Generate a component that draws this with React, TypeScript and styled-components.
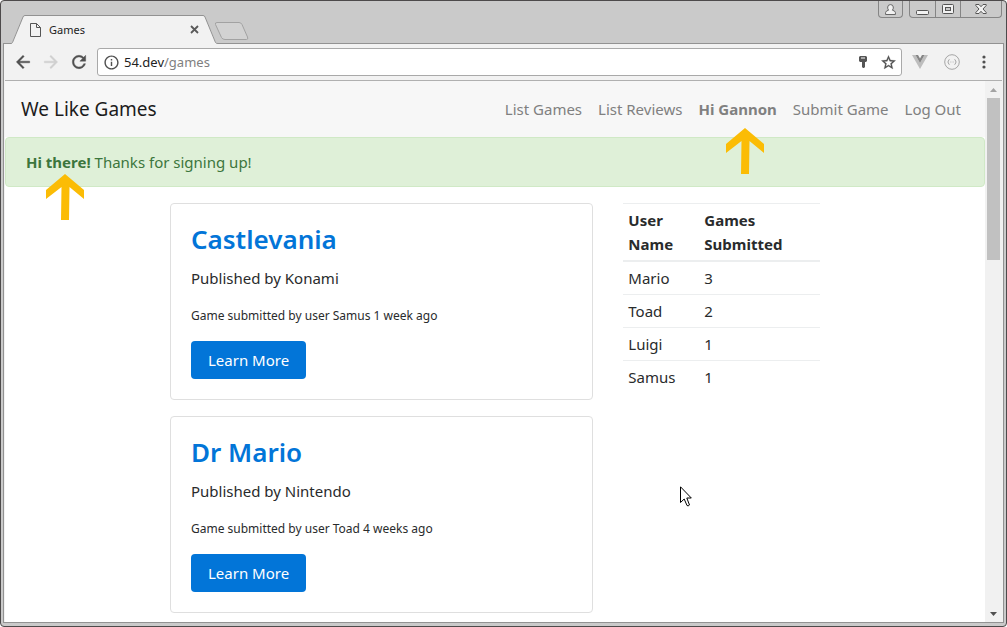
import React from "react";
import styled, { createGlobalStyle } from "styled-components";

const GlobalStyle = createGlobalStyle`
  *, *::before, *::after { box-sizing: border-box; }
  body {
    margin: 0;
    background: #fff;
    color: #292b2c;
    font-family: "Noto Sans", "Open Sans", sans-serif;
    font-size: 15px;
    line-height: 24px;
  }
  button, input { font: inherit; color: inherit; }
  a { text-decoration: none; }
`;

/* ---------- Browser window ---------- */

const Window = styled.div`
  height: 100vh;
  display: flex;
  flex-direction: column;
  overflow: hidden;
  background: #cacaca;
  border: 1px solid #4d4a4b;
  border-radius: 4px;
`;

const TitleBar = styled.header`
  position: relative;
  flex: none;
  height: 42px;
  display: flex;
  justify-content: space-between;
  align-items: flex-end;
  padding-left: 10px;
  padding-right: 4px;
`;

const TabStrip = styled.div`
  display: flex;
  align-items: flex-end;
`;

const Tab = styled.div`
  position: relative;
  z-index: 1;
  width: 207px;
  height: 29px;
  margin-bottom: -1px;
  display: flex;
  align-items: center;
  gap: 8px;
  padding: 0 19px;
  color: #222;
  font-size: 12px;
  line-height: 16px;
`;

const TabShape = styled.svg`
  position: absolute;
  inset: 0;
  z-index: -1;
`;

const TabTitle = styled.span`
  flex: 1;
  font-size: 11px;
`;

const BareButton = styled.button`
  display: flex;
  align-items: center;
  justify-content: center;
  padding: 0;
  border: 0;
  background: none;
`;

const NewTab = styled(BareButton)`
  margin: 0 0 3px -4px;
`;

const WindowControls = styled.div`
  align-self: flex-start;
  display: flex;
  gap: 6px;
`;

const ControlGroup = styled.div`
  display: flex;
  border: 1px solid #858585;
  border-top: 0;
  border-radius: 0 0 4px 4px;
`;

const ControlButton = styled(BareButton)<{ $wide?: boolean }>`
  width: ${(p) => (p.$wide ? 41 : 25)}px;
  height: 16px;
  & + & { border-left: 1px solid #858585; }
`;

const ProfileButton = styled(ControlButton)`
  width: 23px;
`;

const Frame = styled.div`
  flex: 1;
  min-height: 0;
  display: flex;
  flex-direction: column;
  margin: 0 2px 3px;
  padding: 0 1px;
  border: 1px solid #929292;
  background: #f2f2f2;
`;

const Toolbar = styled.div`
  flex: none;
  height: 37px;
  display: flex;
  align-items: center;
  padding: 0 8px;
  border-bottom: 1px solid #b0b0b0;
`;

const NavButton = styled(BareButton)`
  width: 20px;
  height: 20px;
  margin-right: 8px;
`;

const AddressBar = styled.form`
  flex: 1;
  height: 28px;
  display: flex;
  align-items: center;
  padding: 0 3px 0 5px;
  background: #fff;
  border: 1px solid #a9a9a9;
  border-radius: 3px;
  font-size: 13px;
  line-height: 20px;
`;

const Host = styled.label`
  margin-left: 4px;
  color: #222;
`;

const PathInput = styled.input`
  flex: 1;
  min-width: 0;
  padding: 0;
  border: 0;
  outline: 0;
  background: none;
  color: #808080;
`;

const AddressActions = styled.div`
  display: flex;
  gap: 5px;
`;

const Extensions = styled.div`
  display: flex;
  gap: 12px;
  margin-left: 8px;
`;

const ToolButton = styled(BareButton)`
  width: 20px;
  height: 20px;
`;

const Viewport = styled.div`
  position: relative;
  flex: 1;
  min-height: 0;
  display: flex;
  background: #fff;
`;

const Scrollbar = styled.div`
  flex: none;
  width: 17px;
  display: flex;
  flex-direction: column;
  align-items: center;
  background: #f1f1f1;
`;

const ScrollButton = styled(BareButton)`
  width: 17px;
  height: 17px;
`;

const Track = styled.div`
  flex: 1;
  width: 13px;
`;

const Thumb = styled.div`
  height: 32%;
  background: #c1c1c1;
`;

/* ---------- Page ---------- */

const Page = styled.div`
  flex: 1;
  min-width: 0;
  overflow: hidden;
`;

const Navbar = styled.nav`
  display: flex;
  align-items: center;
  justify-content: space-between;
  height: 56px;
  padding: 0 24px 0 16px;
  background: #f7f7f7;
`;

const Brand = styled.a`
  color: #1c1c1c;
  font-size: 19px;
  line-height: 30px;
`;

const NavList = styled.ul`
  display: flex;
  gap: 16px;
  margin: 0;
  padding: 0;
  list-style: none;
`;

const NavLink = styled.a<{ $strong?: boolean }>`
  position: relative;
  color: #808080;
  font-weight: ${(p) => (p.$strong ? 700 : 400)};
`;

const Alert = styled.div`
  margin-bottom: 16px;
  padding: 12px 20px;
  background: #dff0d8;
  border: 1px solid #d0e9c6;
  border-radius: 4px;
  color: #3c763d;
`;

const AlertLead = styled.strong`
  position: relative;
`;

const ArrowMark = styled.svg<{ $gap: number }>`
  position: absolute;
  z-index: 1;
  top: calc(100% + ${(p) => p.$gap}px);
  left: calc(50% - 12px);
`;

const Row = styled.div`
  display: flex;
  max-width: 680px;
  margin: 0 auto;
`;

const GamesColumn = styled.main`
  flex: none;
  width: calc(100% * 2 / 3);
  padding: 0 15px;
`;

const UsersColumn = styled.aside`
  flex: none;
  width: calc(100% / 3);
  padding: 0 15px;
`;

const Card = styled.article`
  margin-bottom: 16px;
  padding: 20px;
  border: 1px solid #dfdfdf;
  border-radius: 4px;
`;

const CardTitle = styled.h3`
  margin: 0 0 11px;
  font-size: 26px;
  font-weight: 600;
  line-height: 31px;
  a { color: #0275d8; }
`;

const CardText = styled.p`
  margin: 0 0 16px;
`;

const CardMeta = styled.p`
  margin: 0 0 15px;
  font-size: 12px;
  line-height: 20px;
`;

const LearnMore = styled.button`
  display: block;
  height: 38px;
  padding: 0 17px;
  border: 0;
  border-radius: 4px;
  background: #0275d8;
  color: #fff;
`;

const UserTable = styled.table`
  width: 100%;
  border-collapse: separate;
  border-spacing: 0;
  th, td {
    padding: 4px 5px;
    text-align: left;
    vertical-align: top;
    border-top: 1px solid #eceeef;
  }
  th { border-bottom: 2px solid #eceeef; }
  th:first-child { width: 76px; }
  tbody tr:first-child td { border-top: 0; }
`;

const Pointer = styled.svg`
  position: absolute;
  left: 675px;
  top: 405px;
`;

const Arrow = ({ gap }: { gap: number }) => (
  <ArrowMark $gap={gap} width="38" height="46" viewBox="0 0 38 46" aria-hidden="true">
    <path d="M19 0L38 16V25L23.5 13L23 46H15L15.500 13L0 25V16Z" fill="#fbbc05" />
  </ArrowMark>
);

const links = ["List Games", "List Reviews", "Hi Gannon", "Submit Game", "Log Out"];

const games = [
  { title: "Castlevania", publisher: "Konami", user: "Samus", age: "1 week ago" },
  { title: "Dr Mario", publisher: "Nintendo", user: "Toad", age: "4 weeks ago" },
];

const users = [
  { name: "Mario", count: 3 },
  { name: "Toad", count: 2 },
  { name: "Luigi", count: 1 },
  { name: "Samus", count: 1 },
];

export default function App() {
  return (
    <>
      <GlobalStyle />
      <Window>
        <TitleBar>
          <TabStrip>
            <Tab>
              <TabShape width="207" height="29" viewBox="0 0 207 29" aria-hidden="true">
                <path d="M0 29V28.500L1 28L12 2Q12.500 .5 14 .5H192Q193.500 .5 194 2L205 28L207 28.500V29Z" fill="#f2f2f2" />
                <path d="M0 28.500Q1 28.500 1.500 27.500L12 2Q12.500 .5 14 .5H192Q193.500 .5 194 2L204.500 27.500Q205 28.500 207 28.500" fill="none" stroke="#929292" />
              </TabShape>
              <svg width="11" height="14" viewBox="0 0 11 14" fill="none" stroke="#555" aria-hidden="true">
                <path d="M.5 .5H6.500L10.500 4.500V13.500H.5ZM6.500 .5V4.500H10.500" />
              </svg>
              <TabTitle>Games</TabTitle>
              <BareButton aria-label="Close tab">
                <svg width="9" height="9" viewBox="0 0 9 9" stroke="#5a5a5a" strokeWidth="1.800">
                  <path d="M1 1L8 8M8 1L1 8" />
                </svg>
              </BareButton>
            </Tab>
            <NewTab aria-label="New tab">
              <svg width="36" height="18" viewBox="0 0 36 18">
                <path d="M3 .5H25Q27 .5 28 2.500L33.500 15Q34.500 17.500 32.500 17.500H11Q8.500 17.500 7.500 15.500L1.500 2.500Q.8 .5 3 .5Z" fill="#d2d2d2" stroke="#a2a2a2" />
              </svg>
            </NewTab>
          </TabStrip>
          <WindowControls>
            <ControlGroup>
              <ProfileButton aria-label="Profile">
                <svg width="11" height="11" viewBox="0 0 11 11" fill="#f2f2f2" stroke="#666">
                  <path d="M.6 10.500V8.500Q.8 6.800 3.600 6.200Q2.500 5 2.700 3Q3 .6 5.500 .6T8.300 3Q8.500 5 7.400 6.200Q10.200 6.800 10.400 8.500V10.500Z" />
                </svg>
              </ProfileButton>
            </ControlGroup>
            <ControlGroup>
              <ControlButton aria-label="Minimize">
                <svg width="13" height="11" viewBox="0 0 13 11">
                  <rect x=".5" y="6.500" width="12" height="4" rx="1" fill="#f2f2f2" stroke="#555" />
                </svg>
              </ControlButton>
              <ControlButton aria-label="Maximize">
                <svg width="12" height="10" viewBox="0 0 12 10" stroke="#555">
                  <rect x=".5" y=".5" width="11" height="9" rx="1" fill="#f2f2f2" />
                  <rect x="3.500" y="3.500" width="5" height="3" fill="#cacaca" />
                </svg>
              </ControlButton>
              <ControlButton $wide aria-label="Close">
                <svg width="12" height="10" viewBox="0 0 12 10" fill="#f2f2f2" stroke="#555">
                  <path d="M.8 .5H4L6 2.700L8 .5H11.200V1.500L8 5L11.200 8.500V9.500H8L6 7.300L4 9.500H.8V8.500L4 5L.8 1.500Z" />
                </svg>
              </ControlButton>
            </ControlGroup>
          </WindowControls>
        </TitleBar>

        <Frame>
          <Toolbar>
            <NavButton aria-label="Back">
              <svg width="20" height="20" viewBox="0 0 24 24" fill="#505050" stroke="#505050" strokeWidth=".5">
                <path d="M20 11H7.830l5.590-5.590L12 4l-8 8 8 8 1.410-1.410L7.830 13H20v-2z" />
              </svg>
            </NavButton>
            <NavButton aria-label="Forward">
              <svg width="20" height="20" viewBox="0 0 24 24" fill="#d0d0d0" stroke="#d0d0d0" strokeWidth=".5">
                <path d="M12 4l-1.410 1.410L16.170 11H4v2h12.170l-5.580 5.590L12 20l8-8z" />
              </svg>
            </NavButton>
            <NavButton aria-label="Reload">
              <svg width="20" height="20" viewBox="0 0 24 24" fill="#505050" stroke="#505050" strokeWidth=".5">
                <path d="M17.650 6.350C16.200 4.900 14.210 4 12 4c-4.420 0-7.990 3.580-7.990 8s3.570 8 7.990 8c3.730 0 6.840-2.550 7.730-6h-2.080c-.82 2.330-3.040 4-5.650 4-3.310 0-6-2.690-6-6s2.690-6 6-6c1.660 0 3.140.69 4.220 1.780L13 11h7V4l-2.350 2.350z" />
              </svg>
            </NavButton>
            <AddressBar onSubmit={(e) => e.preventDefault()}>
              <BareButton type="button" aria-label="Site information">
                <svg width="17" height="17" viewBox="0 0 24 24" fill="#505050">
                  <path d="M11 17h2v-6h-2v6zm1-15C6.480 2 2 6.480 2 12s4.480 10 10 10 10-4.480 10-10S17.520 2 12 2zm0 18c-4.410 0-8-3.590-8-8s3.590-8 8-8 8 3.590 8 8-3.590 8-8 8zM11 9h2V7h-2v2z" />
                </svg>
              </BareButton>
              <Host htmlFor="address">54.dev</Host>
              <PathInput id="address" defaultValue="/games" />
              <AddressActions>
                <ToolButton type="button" aria-label="Saved passwords">
                  <svg width="8" height="12" viewBox="0 0 8 12" fill="#555">
                    <path d="M1 0H7L8 1V5L7 6H6V11L5 12H4L3 11V6H1L0 5V1ZM2 1.500V2.500H6V1.500Z" fillRule="evenodd" />
                  </svg>
                </ToolButton>
                <ToolButton type="button" aria-label="Bookmark">
                  <svg width="17" height="17" viewBox="0 0 24 24" fill="#505050" stroke="#505050" strokeWidth=".4">
                    <path d="M22 9.240l-7.190-.62L12 2 9.190 8.630 2 9.240l5.460 4.730L5.820 21 12 17.270 18.180 21l-1.630-7.030L22 9.240zM12 15.400l-3.760 2.270 1-4.280-3.320-2.880 4.380-.38L12 6.100l1.710 4.040 4.380.38-3.320 2.880 1 4.280L12 15.400z" />
                  </svg>
                </ToolButton>
              </AddressActions>
            </AddressBar>
            <Extensions>
              <ToolButton aria-label="Vue devtools">
                <svg width="16" height="14" viewBox="0 0 16 14">
                  <path d="M0 0H3.500L8 8L12.500 0H16L8 14Z" fill="#bdbdbd" />
                  <path d="M3.500 0H6L8 3.500L10 0H12.500L8 8Z" fill="#858585" />
                </svg>
              </ToolButton>
              <ToolButton aria-label="JSON viewer">
                <svg width="16" height="16" viewBox="0 0 16 16" fill="none" stroke="#a5a5a5">
                  <circle cx="8" cy="8" r="7.300" />
                  <path d="M5.500 5.500Q4.500 5.500 4.500 7L3.800 8L4.500 9Q4.500 10.500 5.500 10.500M10.500 5.500Q11.500 5.500 11.500 7L12.200 8L11.500 9Q11.500 10.500 10.500 10.500M6.500 8H7.300M8.700 8H9.500" />
                </svg>
              </ToolButton>
              <ToolButton aria-label="Menu">
                <svg width="4" height="14" viewBox="0 0 4 14" fill="#505050">
                  <circle cx="2" cy="2" r="1.600" />
                  <circle cx="2" cy="7" r="1.600" />
                  <circle cx="2" cy="12" r="1.600" />
                </svg>
              </ToolButton>
            </Extensions>
          </Toolbar>

          <Viewport>
            <Page>
              <Navbar>
                <Brand href="#">We Like Games</Brand>
                <NavList>
                  {links.map((label) => {
                    const isUser = label === "Hi Gannon";
                    return (
                      <li key={label}>
                        <NavLink href="#" $strong={isUser}>
                          {label}
                          {isUser && <Arrow gap={9} />}
                        </NavLink>
                      </li>
                    );
                  })}
                </NavList>
              </Navbar>
              <Alert role="alert">
                <AlertLead>
                  Hi there!
                  <Arrow gap={2} />
                </AlertLead>{" "}
                Thanks for signing up!
              </Alert>
              <Row>
                <GamesColumn>
                  {games.map((g) => (
                    <Card key={g.title}>
                      <CardTitle>
                        <a href="#">{g.title}</a>
                      </CardTitle>
                      <CardText>Published by {g.publisher}</CardText>
                      <CardMeta>
                        Game submitted by user {g.user} {g.age}
                      </CardMeta>
                      <LearnMore>Learn More</LearnMore>
                    </Card>
                  ))}
                </GamesColumn>
                <UsersColumn>
                  <UserTable>
                    <thead>
                      <tr>
                        <th scope="col">User Name</th>
                        <th scope="col">Games Submitted</th>
                      </tr>
                    </thead>
                    <tbody>
                      {users.map((u) => (
                        <tr key={u.name}>
                          <td>{u.name}</td>
                          <td>{u.count}</td>
                        </tr>
                      ))}
                    </tbody>
                  </UserTable>
                </UsersColumn>
              </Row>
            </Page>
            <Scrollbar>
              <ScrollButton aria-label="Scroll up">
                <svg width="7" height="4" viewBox="0 0 7 4" fill="#a3a3a3">
                  <path d="M0 4L3.500 0L7 4Z" />
                </svg>
              </ScrollButton>
              <Track>
                <Thumb />
              </Track>
              <ScrollButton aria-label="Scroll down">
                <svg width="7" height="4" viewBox="0 0 7 4" fill="#505050">
                  <path d="M0 0H7L3.500 4Z" />
                </svg>
              </ScrollButton>
            </Scrollbar>
            <Pointer width="12" height="21" viewBox="0 0 12 21" aria-hidden="true">
              <path d="M.5 .8V16.500L4.200 13L7 19.500Q8 20.500 9.500 19L6.800 12H11.300Z" fill="#fff" stroke="#000" />
            </Pointer>
          </Viewport>
        </Frame>
      </Window>
    </>
  );
}
